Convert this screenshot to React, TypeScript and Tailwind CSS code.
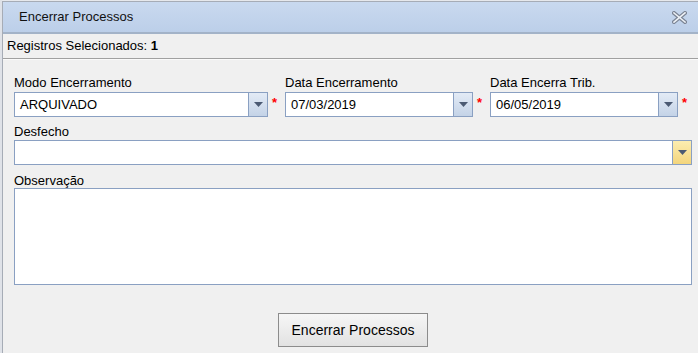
import React from 'react';

function Arrow() {
  return (
    <svg width="9" height="5" viewBox="0 0 9 5">
      <path d="M0 0 H9 L4.5 5 Z" fill="#4b5a73" />
    </svg>
  );
}

function Combo({ value, width, yellow = false }: { value: string; width: string; yellow?: boolean }) {
  return (
    <div className={`flex h-[25px] border border-[#8aa0c2] bg-white ${width}`}>
      <div className="flex-1 flex items-center pl-[5px] text-[13px] text-black">{value}</div>
      <div
        className={`w-[19px] flex items-center justify-center border-l border-[#8aa0c2] ${
          yellow ? 'bg-gradient-to-b from-[#fcedb0] to-[#f3d57c]' : 'bg-gradient-to-b from-[#e3ebf6] to-[#c4d3e7]'
        }`}
      >
        <Arrow />
      </div>
    </div>
  );
}

function Star() {
  return <span className="w-[14px] pl-[4px] text-[13px] leading-none text-[#ff0000] font-bold -mt-[4px]">*</span>;
}

export default function App() {
  return (
    <div className="w-[698px] h-[353px] flex bg-[#e6e8ec] overflow-hidden" style={{ fontFamily: '"Liberation Sans", Arial, sans-serif' }}>
      <div className="w-[2px] shrink-0 bg-[#dfe2e8]" />
      <div className="flex-1 flex flex-col mt-[1px] border-l border-t border-[#a6acb6] bg-[#f0f0f0]">
        {/* Header */}
        <div className="h-[32px] shrink-0 flex items-center justify-between bg-gradient-to-b from-[#c9d9ef] to-[#bccfe9] border-b-2 border-[#a3b3c8] pl-[16px] pr-[14px]">
          <span className="text-[13px] text-[#111]">Encerrar Processos</span>
          <svg width="15" height="13" viewBox="0 0 15 13">
            <path d="M2 2 L13 11 M13 2 L2 11" stroke="#7b8494" strokeWidth="4" strokeLinecap="square" />
            <path d="M2 2 L13 11 M13 2 L2 11" stroke="#eef2f7" strokeWidth="1.6" strokeLinecap="square" />
          </svg>
        </div>

        {/* Selected count */}
        <div className="h-[24px] flex items-center pl-[4px] text-[13px] text-black">
          Registros Selecionados:&nbsp;<b>1</b>
        </div>
        <div className="h-[2px] mr-[3px] border-t border-[#a0a0a0] bg-[#fafafa]" />

        {/* Form */}
        <div className="flex flex-col pl-[11px] pr-[9px] pt-[15px]">
          <div className="flex">
            <div className="flex flex-col">
              <span className="h-[17px] text-[13px] leading-[16px] text-black">Modo Encerramento</span>
              <div className="flex items-center">
                <Combo value="ARQUIVADO" width="w-[254px]" />
                <Star />
              </div>
            </div>
            <div className="flex flex-col ml-[3px]">
              <span className="h-[17px] text-[13px] leading-[16px] text-black">Data Encerramento</span>
              <div className="flex items-center">
                <Combo value="07/03/2019" width="w-[188px]" />
                <Star />
              </div>
            </div>
            <div className="flex flex-col ml-[3px]">
              <span className="h-[17px] text-[13px] leading-[16px] text-black">Data Encerra Trib.</span>
              <div className="flex items-center">
                <Combo value="06/05/2019" width="w-[188px]" />
                <Star />
              </div>
            </div>
          </div>

          <span className="h-[16px] mt-[7px] text-[13px] leading-[16px] text-black">Desfecho</span>
          <Combo value="" width="w-full" yellow />

          <span className="h-[15px] mt-[8px] text-[13px] leading-[16px] text-black">Observação</span>
          <div className="h-[97px] border border-[#8aa0c2] bg-white" />

          <div className="flex justify-center pt-[28px]">
            <button className="w-[150px] h-[34px] border border-[#8c8c8c] bg-gradient-to-b from-[#f6f6f6] to-[#e2e2e2] text-[14px] text-black">
              Encerrar Processos
            </button>
          </div>
        </div>
      </div>
    </div>
  );
}
